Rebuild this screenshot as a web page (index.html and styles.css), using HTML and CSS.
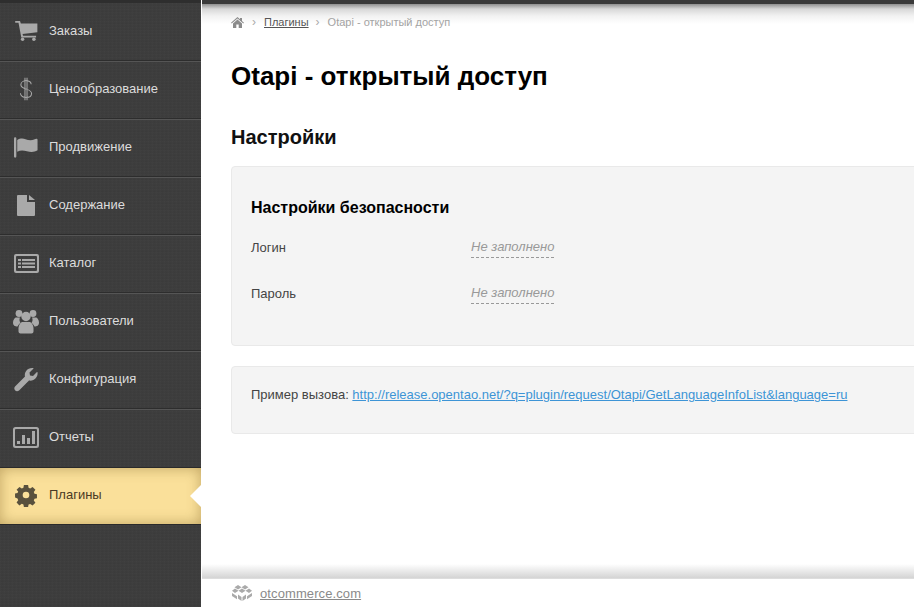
FILE: index.html
```html
<!DOCTYPE html>
<html lang="ru">
<head>
<meta charset="utf-8">
<title>Otapi - открытый доступ</title>
<link rel="stylesheet" href="styles.css">
</head>
<body>
<div class="layout">
  <nav class="sidebar">
    <a class="item"><span class="ico"><svg width="23" height="20" viewBox="0 0 26 23"><path d="M0 0h5.500l1 3H25.500v10L8.500 15l.5 2h15v2H7L3.800 2H0z"/><circle cx="8.500" cy="21" r="2"/><circle cx="21.500" cy="21" r="2"/></svg></span><span class="label">Заказы</span></a>
    <a class="item"><span class="ico"><svg width="14" height="24" viewBox="0 0 16 28" fill="none" stroke-width="1.200"><path d="M14 8.500C14 5.500 11 4.500 8 4.500S2 6 2 9s3 4 6 5 6.500 2 6.500 5.300S11 24 8 24s-6.500-1.500-6.500-5M6.800 1v26M9.200 1v26"/></svg></span><span class="label">Ценообразование</span></a>
    <a class="item"><span class="ico"><svg width="24" height="21" viewBox="0 0 26 22"><rect x="0" y="0" width="2.500" height="22" rx="1.200"/><path d="M3.500 3c3-2 6-2 9-1s6 2 10 0c.6-.2 3-.9 3 .5V14c-4 2.500-8 2-11.500 1s-7-1.500-10.500.5z"/></svg></span><span class="label">Продвижение</span></a>
    <a class="item"><span class="ico"><svg width="18" height="21" viewBox="0 0 18 21"><path d="M1 0h9v7h8v13a1 1 0 0 1-1 1H1a1 1 0 0 1-1-1V1a1 1 0 0 1 1-1z"/><path d="M12 0l6 5h-6z"/></svg></span><span class="label">Содержание</span></a>
    <a class="item"><span class="ico"><svg width="25" height="19" viewBox="0 0 25 19"><path fill-rule="evenodd" d="M2 0h21a2 2 0 0 1 2 2v15a2 2 0 0 1-2 2H2a2 2 0 0 1-2-2V2a2 2 0 0 1 2-2zM2 3v13a1 1 0 0 0 1 1h19a1 1 0 0 0 1-1V3a1 1 0 0 0-1-1H3a1 1 0 0 0-1 1z"/><path d="M4 5h3v2H4zM8 5h13v2H8zM4 8.500h3v2H4zM8 8.500h13v2H8zM4 12h3v2H4zM8 12h13v2H8z"/></svg></span><span class="label">Каталог</span></a>
    <a class="item"><span class="ico"><svg width="26" height="26" viewBox="0 0 26 25"><circle cx="6" cy="5" r="3.400"/><circle cx="20" cy="5" r="3.400"/><path d="M0 14c0-3 2-5 3-5h4c-1 2-.5 4 .5 5.500C6 15.500 5 17 4.500 18 2 18 0 17 0 14zM26 14c0-3-2-5-3-5h-4c1 2 .5 4-.5 5.500 1.500 1 2.500 2.500 3 3.500 2.500 0 4.500-1 4.500-4z"/><circle cx="13" cy="8" r="4.700"/><path d="M5.500 20c0-4 2.500-6.500 4-6.500h7c1.500 0 4 2.500 4 6.500v3c0 1-1 2-2 2h-11c-1 0-2-1-2-2z"/></svg></span><span class="label">Пользователи</span></a>
    <a class="item"><span class="ico"><svg width="24" height="24" viewBox="0 0 24 24"><path d="M1 19.500L11 9.500C10 5 13.500 .5 19 1c.6 0 .6.500.3.800L15.500 5.500l.5 3 3 .5 3.700-3.700c.4-.4.800-.2.900.3.400 5-4 9-8.600 8L5 23.500c-1.200 1.100-2.800 1-3.800 0s-1.300-2.800-.2-4z"/></svg></span><span class="label">Конфигурация</span></a>
    <a class="item"><span class="ico"><svg width="26" height="21" viewBox="0 0 26 21"><path fill-rule="evenodd" d="M2.500 0h21A2.500 2.500 0 0 1 26 2.500v16a2.500 2.500 0 0 1-2.500 2.500h-21A2.500 2.500 0 0 1 0 18.500v-16A2.500 2.500 0 0 1 2.500 0zM2 3v15a1 1 0 0 0 1 1h20a1 1 0 0 0 1-1V3a1 1 0 0 0-1-1H3a1 1 0 0 0-1 1z"/><path d="M4 14h3v3H4zM9 8h3v9H9zM14 11h3v6h-3zM19 4h3v13h-3z"/></svg></span><span class="label">Отчеты</span></a>
    <a class="item active"><span class="ico"><svg width="20" height="20" viewBox="0 0 21 21"><path fill-rule="evenodd" d="M8.300 0h4.400l.5 3 1.700.7L17.400 2l3 3-1.700 2.400.7 1.800 2.600.5v4.300l-2.600.5-.7 1.700 1.700 2.400-3 3-2.500-1.700-1.700.7-.5 2.400H8.300l-.5-2.600-1.700-.7-2.500 1.700-3-3 1.700-2.400-.7-1.700L-1 13V9l2.600-.5.7-1.800L.6 5l3-3 2.500 1.700 1.700-.7zM10.500 7a3.500 3.500 0 1 0 0 7 3.500 3.500 0 0 0 0-7z"/></svg></span><span class="label">Плагины</span></a>
  </nav>
  <div class="content">
    <main class="main">
      <div class="crumbs">
        <svg class="home" width="13" height="11" viewBox="0 0 13 11"><path d="M6.500 0L9 2.200V1h2v3l2 1.800-.7.700-5.800-5-5.800 5L0 5.800zM2 6.500l4.500-4 4.500 4V11H7.700V7.500H5.300V11H2z"/></svg>
        <span class="sep">›</span>
        <a class="crumb-link">Плагины</a>
        <span class="sep">›</span>
        <span class="crumb-current">Otapi - открытый доступ</span>
      </div>
      <h1 class="title">Otapi - открытый доступ</h1>
      <h2 class="subtitle">Настройки</h2>
      <section class="panel settings">
        <h3 class="panel-title">Настройки безопасности</h3>
        <div class="row"><span class="row-label">Логин</span><span class="editable">Не заполнено</span></div>
        <div class="row"><span class="row-label">Пароль</span><span class="editable">Не заполнено</span></div>
      </section>
      <section class="panel example">Пример вызова: <a class="example-link">http://release.opentao.net/?q=plugin/request/Otapi/GetLanguageInfoList&amp;language=ru</a></section>
    </main>
    <footer class="footer">
      <svg width="20" height="16" viewBox="0 0 20 16"><path d="M6 0l3.500 2.200L6 4.400 2.500 2.200zM13 0l3.500 2.200L13 4.400 9.500 2.200zM3 3.500l3.500 2.200L3 8 0 5.700zM17 3.500l3 2.200L17 8l-3.500-2.300zM10 3.500l3.500 2.200L10 8 6.500 5.700zM0 8l5 3.200v3L0 11zM20 8l-5 3.200v3L20 11zM6 9.500l3.500 2.500v4L6 13.500zM14 9.500L10.500 12v4l3.500-2.500z"/></svg>
      <a class="footer-link">otcommerce.com</a>
    </footer>
  </div>
</div>
</body>
</html>
```
FILE: styles.css
```css
* { box-sizing: border-box; }
html, body { margin: 0; height: 100%; overflow: hidden; }
body { font-family: "Liberation Sans", Arial, sans-serif; font-size: 13px; color: #333; background: #fff; }

.layout { display: flex; height: 607px; width: 914px; overflow: hidden; }

.sidebar {
  width: 201px;
  flex: none;
  padding-top: 4px;
  background-color: #3d3d3d;
  background-image:
    repeating-linear-gradient(0deg, rgba(255,255,255,.008) 0 1px, rgba(0,0,0,.012) 1px 2px, rgba(0,0,0,0) 2px 3px),
    repeating-linear-gradient(90deg, rgba(255,255,255,.008) 0 1px, rgba(0,0,0,.012) 1px 3px, rgba(0,0,0,0) 3px 4px);
  box-shadow: inset 0 3px 0 #2e2e2e;
}
.item {
  height: 58px;
  display: flex;
  align-items: center;
  padding-bottom: 3px;
  color: #dcdcdc;
  border-bottom: 1px solid #555;
  box-shadow: inset 0 -1px 0 #2d2d2d;
}
.item:nth-child(8) { border-bottom: 1px solid #2a2a2a; box-shadow: none; }
.item .label { position: relative; top: -1px; }
.ico { width: 49px; flex: none; display: flex; justify-content: center; padding-left: 3px; }
.ico svg { fill: #a9a9a9; stroke: none; overflow: visible; display: block; }
.item:nth-child(2) .ico svg { fill: none; stroke: #a9a9a9; }
.label { white-space: nowrap; }

.active {
  height: 57px;
  position: relative;
  color: #4a3a25;
  background: #fae09a;
  box-shadow: inset 0 0 14px rgba(120, 90, 30, .45);
  border-bottom: 1px solid #2a2a2a;
  padding-bottom: 2px;
}
.active .ico svg { fill: #59513d; }
.active::after {
  content: "";
  position: absolute;
  right: 0;
  top: 17px;
  border: 11px solid transparent;
  border-left-width: 0;
  border-right-color: #fff;
}

.content { flex: 1; min-width: 0; display: flex; flex-direction: column; border-left: 1px solid #fff; }
.main {
  flex: 1;
  min-height: 0;
  padding: 0 0 0 29px;
  background: linear-gradient(#8f8f8f 0, #d8d8d8 5px, #f2f2f2 12px, #fff 20px);
  border-top: 4px solid #3a3a3a;
  position: relative;
}
.main::after {
  content: "";
  position: absolute;
  left: 0;
  right: 0;
  bottom: 0;
  height: 14px;
  background: linear-gradient(rgba(200,200,200,0), #d4d4d4);
}
.crumbs { display: flex; align-items: center; height: 12px; margin-top: 12px; font-size: 11px; }
.home { fill: #8b8b8b; margin-right: 8px; }
.sep { color: #aaa; font-size: 12px; margin-right: 8px; }
.crumb-link { color: #555; text-decoration: underline; margin-right: 7px; }
.crumb-current { color: #a3a3a3; }
.title { margin: 33px 0 0; font-size: 26px; line-height: 30px; font-weight: bold; color: #000; }
.subtitle { margin: 34px 0 0; font-size: 20px; line-height: 24px; font-weight: bold; color: #111; }
.panel {
  margin-right: -10px;
  background: #f4f4f4;
  border: 1px solid #e9e9e9;
  border-radius: 4px;
  padding-left: 19px;
}
.settings { margin-top: 17px; height: 180px; padding-top: 32px; }
.panel-title { margin: 0 0 16px; font-size: 16px; line-height: 18px; font-weight: bold; color: #000; }
.row { display: flex; height: 46px; align-items: flex-start; padding-top: 6px; color: #444; }
.row-label { width: 220px; line-height: 16px; padding-top: 1px; }
.editable { font-style: italic; font-size: 13px; color: #999; line-height: 16px; padding-bottom: 2px; border-bottom: 1px dashed #999; }
.example { margin-top: 20px; height: 68px; padding-top: 20px; line-height: 16px; color: #444; }
.example-link { color: #3d94d6; text-decoration: underline; }
.footer { height: 29px; flex: none; display: flex; align-items: center; padding-left: 30px; border-top: 1px solid #ddd; background: #fff; }
.footer svg { fill: #aaa; margin-right: 8px; }
.footer-link { font-size: 13px; letter-spacing: .1px; color: #8a8a8a; text-decoration: underline; }
```
